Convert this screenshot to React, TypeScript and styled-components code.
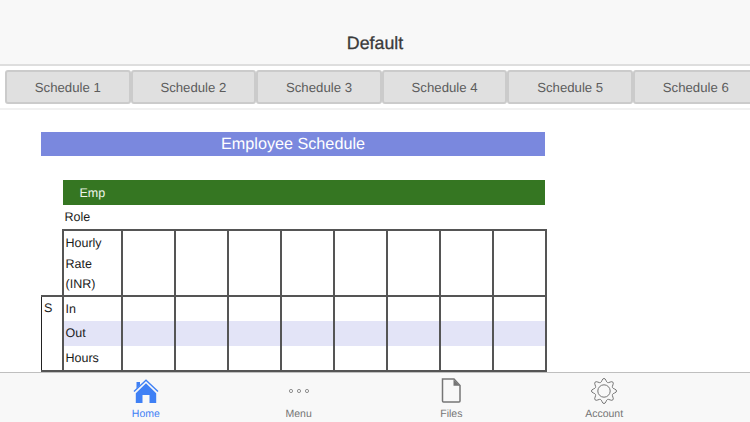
import React from "react";
import styled, { createGlobalStyle } from "styled-components";

const Global = createGlobalStyle`
  html, body { margin: 0; padding: 0; height: 100%; background: #fff; }
  body { font-family: "Liberation Sans", Arial, sans-serif; text-rendering: geometricPrecision; }
`;

const Page = styled.div`
  width: 750px; height: 422px; display: flex; flex-direction: column; overflow: hidden; background: #fff;
`;
const Header = styled.header`
  height: 64px; flex: none; background: #f8f8f8; border-bottom: 2px solid #dedede;
  display: flex; align-items: flex-end; justify-content: center; box-sizing: content-box;
`;
const Title = styled.h1`
  margin: 0 0 11px; font-size: 17.8px; line-height: 20px; font-weight: 400; color: #3a3a3a;
  -webkit-text-stroke: 0.3px #3a3a3a;
`;
const TabStrip = styled.nav`
  height: 44px; flex: none; box-sizing: border-box; border-bottom: 2px solid #f1f1f1;
  padding: 4px 0 0 5px; display: flex; overflow: hidden;
`;
const TabButton = styled.div<{ $last?: boolean }>`
  flex: none; width: 125.6px; height: 34px; box-sizing: border-box; background: #e0e0e0;
  border: 2px solid #cbcbcb; border-radius: ${p => (p.$last ? "3px 0 0 3px" : "3px")};
  display: flex; align-items: center; justify-content: center;
  font-size: 13.2px; color: #5c5c5c;
`;
const Content = styled.main`
  flex: 1; min-height: 0; overflow: hidden; padding: 22px 0 0 41px;
`;
const Banner = styled.div`
  width: 504px; height: 24px; background: #7a88de; color: #fff;
  display: flex; align-items: center; justify-content: center; font-size: 16.2px;
`;
const Grid = styled.table`
  margin-top: 24px; width: 504.5px; table-layout: fixed; border-collapse: collapse;
  font-size: 12.5px; color: #1c1c1c;
`;
const SideCol = styled.col`width: 21px;`;
const LabelCol = styled.col`width: 59.5px;`;
const DataCol = styled.col`width: 53px;`;
const EmpCell = styled.td`
  height: 24.5px; padding: 1px 0 0 17px; box-sizing: border-box; color: #eef5ea;
  background: linear-gradient(to left, #fff 1px, #357622 1px);
`;
const RoleCell = styled.td`height: 24px; padding: 0 0 0 2px;`;
const Blank = styled.td`padding: 0;`;
const LineCell = styled.td<{ $shade?: boolean; $h?: number }>`
  height: ${p => p.$h ?? 24.5}px; padding: 0 0 0 2px; border-left: 2px solid #555; border-right: 2px solid #555;
  background: ${p => (p.$shade ? "#e3e4f7" : "#fff")};
  line-height: 20.5px;
`;
const RateCell = styled(LineCell)`vertical-align: bottom;`;
const RuledRow = styled.tr`
  & > td { border-top: 2px solid #555; }
`;
const SideCell = styled.td`
  padding: 4px 0 0 2px; vertical-align: top; border: 1px solid #222; border-right: 2px solid #555;
`;
const TabBar = styled.footer`
  height: 50px; flex: none; box-sizing: border-box; background: #f8f8f8; border-top: 1px solid #bfbfbf;
  padding: 0 69.5px; display: grid; grid-template-columns: repeat(4, 1fr);
`;
const TabItem = styled.div<{ $active?: boolean }>`
  display: flex; flex-direction: column; align-items: center; height: 49px;
  padding-top: 4px; box-sizing: border-box; font-size: 10.5px; color: ${p => (p.$active ? "#3f80f5" : "#757575")};
`;
const IconSlot = styled.div`height: 27px; display: flex; align-items: center; justify-content: center;`;
const TabLabel = styled.span`margin-top: 4px; line-height: 12px;`;

const HomeIcon = () => (
  <svg width="26" height="26" viewBox="0 0 26 26">
    <path d="M1 13.5 13 2.2l12 11.3" fill="none" stroke="#3f80f5" strokeWidth="1.4" />
    <path d="M3.5 4h3.5v3.2l-3.5 3.3z" fill="#3f80f5" />
    <path d="M2.8 15.2 13 5.2l10.2 10V25H16.5v-8h-7v8H2.8z" fill="#3f80f5" />
  </svg>
);
const DotsIcon = () => (
  <svg width="22" height="6" viewBox="0 0 22 6">
    {[3, 11, 19].map(x => <circle key={x} cx={x} cy="3" r="1.6" fill="none" stroke="#777" strokeWidth="0.8" />)}
  </svg>
);
const FileIcon = () => (
  <svg width="20" height="25" viewBox="0 0 20 25">
    <path d="M1.5 1h11.5l6 6.5V23a1 1 0 0 1-1 1H2.5a1 1 0 0 1-1-1z" fill="none" stroke="#757575" strokeWidth="1.5" />
    <path d="M12.5 1.5v6.2h6.2z" fill="#757575" />
  </svg>
);
const gearPath = (() => {
  const n = 32;
  const pt = (i: number) => {
    const a = (i / n) * Math.PI * 2 - Math.PI / 2 - Math.PI / 32;
    const r = i % 4 === 0 || i % 4 === 1 ? 12.6 : 9.2;
    return [13 + r * Math.cos(a), 13 + r * Math.sin(a)];
  };
  const mid = (a: number[], b: number[]) => [(a[0] + b[0]) / 2, (a[1] + b[1]) / 2];
  const f = (p: number[]) => `${p[0].toFixed(2)} ${p[1].toFixed(2)}`;
  let d = `M${f(mid(pt(0), pt(1)))}`;
  for (let i = 1; i <= n; i++) d += `Q${f(pt(i % n))} ${f(mid(pt(i % n), pt((i + 1) % n)))}`;
  return d + "Z";
})();
const GearIcon = () => (
  <svg width="26" height="26" viewBox="0 0 26 26">
    <path d={gearPath} fill="none" stroke="#757575" strokeWidth="1" />
    <circle cx="13" cy="13" r="6.2" fill="none" stroke="#757575" strokeWidth="1" />
  </svg>
);

const tabs = [1, 2, 3, 4, 5, 6];
const dataCols = [0, 1, 2, 3, 4, 5, 6, 7];

const Cells = ({ shade, h }: { shade?: boolean; h?: number }) => (
  <>{dataCols.map(c => <LineCell key={c} $shade={shade} $h={h} />)}</>
);

export default function App() {
  return (
    <Page>
      <Global />
      <Header><Title>Default</Title></Header>
      <TabStrip>
        {tabs.map(n => <TabButton key={n} $last={n === 6}>Schedule {n}</TabButton>)}
      </TabStrip>
      <Content>
        <Banner>Employee Schedule</Banner>
        <Grid>
          <colgroup>
            <SideCol /><LabelCol />
            {dataCols.map(c => <DataCol key={c} />)}
          </colgroup>
          <tbody>
            <tr><Blank /><EmpCell colSpan={9}>Emp</EmpCell></tr>
            <tr><Blank /><RoleCell colSpan={9}>Role</RoleCell></tr>
            <RuledRow><Blank style={{ borderTop: "none" }} /><RateCell $h={64}>Hourly<br />Rate<br />(INR)</RateCell><Cells h={64} /></RuledRow>
            <RuledRow><SideCell rowSpan={3}>S</SideCell><LineCell>In</LineCell><Cells /></RuledRow>
            <tr><LineCell $shade>Out</LineCell><Cells shade /></tr>
            <tr><LineCell>Hours</LineCell><Cells /></tr>
            <RuledRow><SideCell>&nbsp;</SideCell><LineCell /><Cells /></RuledRow>
          </tbody>
        </Grid>
      </Content>
      <TabBar>
        <TabItem $active><IconSlot><HomeIcon /></IconSlot><TabLabel>Home</TabLabel></TabItem>
        <TabItem><IconSlot><DotsIcon /></IconSlot><TabLabel>Menu</TabLabel></TabItem>
        <TabItem><IconSlot><FileIcon /></IconSlot><TabLabel>Files</TabLabel></TabItem>
        <TabItem><IconSlot><GearIcon /></IconSlot><TabLabel>Account</TabLabel></TabItem>
      </TabBar>
    </Page>
  );
}
